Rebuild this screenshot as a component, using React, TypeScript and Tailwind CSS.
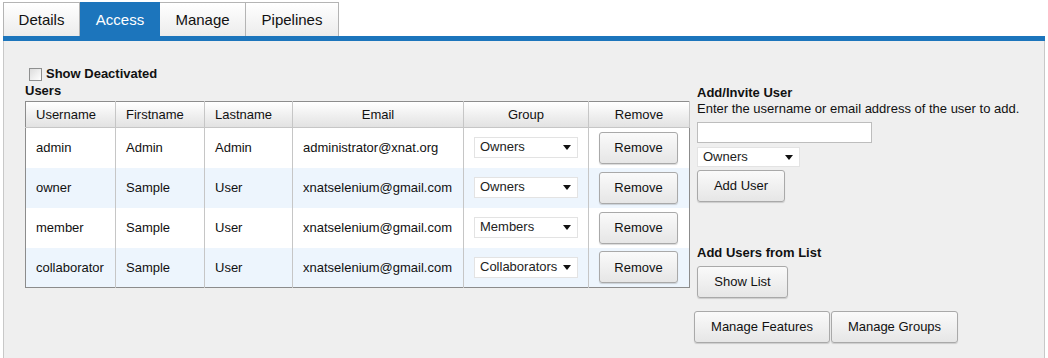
const users = [
  { username: "admin", first: "Admin", last: "Admin", email: "administrator@xnat.org", group: "Owners" },
  { username: "owner", first: "Sample", last: "User", email: "xnatselenium@gmail.com", group: "Owners" },
  { username: "member", first: "Sample", last: "User", email: "xnatselenium@gmail.com", group: "Members" },
  { username: "collaborator", first: "Sample", last: "User", email: "xnatselenium@gmail.com", group: "Collaborators" },
];

const tabs = ["Details", "Access", "Manage", "Pipelines"];

function FakeSelect({ value, className }: { value: string; className: string }) {
  return (
    <div className={`flex items-center justify-between bg-white border border-[#e3e3e3] pl-[5px] pr-[6px] text-[13px] text-[#222] ${className}`}>
      <span className="leading-none -mt-[2px]">{value}</span>
      <svg width="8" height="5" viewBox="0 0 8 5">
        <path d="M0 0h8L4 5z" fill="#111" />
      </svg>
    </div>
  );
}

function Btn({ label, className }: { label: string; className: string }) {
  return (
    <button className={`flex items-center justify-center rounded-[3px] border border-[#a9a9a9] bg-gradient-to-b from-[#fafafa] to-[#e6e6e6] shadow-[0_1px_1px_rgba(0,0,0,0.15)] text-[13px] text-[#111] ${className}`}>
      {label}
    </button>
  );
}

export default function App() {
  return (
    <div className="w-[1048px] h-[358px] bg-white pt-[2px] pl-[3px] font-['Liberation_Sans',Arial,sans-serif] text-[#111] overflow-hidden">
      {/* tabs */}
      <div className="flex h-[34px]">
        {tabs.map((t, i) =>
          t === "Access" ? (
            <div key={t} className="w-[80px] flex items-center justify-center pt-[2px] bg-[#1c75bc] text-white text-[15px]">
              {t}
            </div>
          ) : (
            <div
              key={t}
              className={`flex items-center justify-center pt-[2px] border-t border-r border-[#b4b4b4] bg-gradient-to-b from-white to-[#ececec] text-[15px] ${
                i === 0 ? "w-[77px] border-l" : t === "Manage" ? "w-[86px]" : "w-[93px]"
              }`}
            >
              {t}
            </div>
          )
        )}
      </div>
      <div className="w-[1042px] h-[5px] bg-[#1c75bc]" />

      {/* panel */}
      <div className="w-[1042px] h-[320px] bg-[#efefef] border-l border-r border-[#c8c8c8] flex pl-[21px] pt-[26px]">
        <div className="w-[665px]">
          <label className="flex items-center ml-[4px] h-[14px] text-[13px] font-bold">
            <span className="w-[13px] h-[13px] border border-[#8e8f8f] bg-gradient-to-br from-[#dcdcdc] to-white mr-[4px]" />
            Show Deactivated
          </label>
          <div className="text-[13px] font-bold leading-[15px] mt-[2px]">Users</div>
          <table className="mt-[3px] w-[664px] border border-[#8c8c8c] border-collapse text-[13px] table-fixed">
            <colgroup>
              <col className="w-[90px]" />
              <col className="w-[89px]" />
              <col className="w-[88px]" />
              <col className="w-[171px]" />
              <col className="w-[125px]" />
              <col className="w-[101px]" />
            </colgroup>
            <thead>
              <tr className="h-[26px] bg-gradient-to-b from-white to-[#e1e1e1]">
                {["Username", "Firstname", "Lastname", "Email", "Group", "Remove"].map((h, i) => (
                  <th
                    key={h}
                    className={`font-normal border-r border-b border-[#c6c6c6] ${i < 3 ? "text-left pl-[10px]" : "text-center"}`}
                  >
                    {h}
                  </th>
                ))}
              </tr>
            </thead>
            <tbody>
              {users.map((u, i) => (
                <tr key={u.username} className={`h-[40px] ${i % 2 ? "bg-[#edf5fd]" : "bg-white"}`}>
                  <td className="pl-[10px] border-r border-[#c6c6c6]">{u.username}</td>
                  <td className="pl-[10px] border-r border-[#c6c6c6]">{u.first}</td>
                  <td className="pl-[10px] border-r border-[#c6c6c6]">{u.last}</td>
                  <td className="pl-[10px] border-r border-[#c6c6c6]">{u.email}</td>
                  <td className="border-r border-[#c6c6c6]">
                    <FakeSelect value={u.group} className="ml-[10px] w-[104px] h-[21px]" />
                  </td>
                  <td>
                    <Btn label="Remove" className="ml-[10px] w-[79px] h-[32px]" />
                  </td>
                </tr>
              ))}
            </tbody>
          </table>
        </div>

        <div className="ml-[7px] pt-[18px] flex flex-col">
          <div className="text-[13px] font-bold leading-[16px]">Add/Invite User</div>
          <div className="text-[13px] leading-[16px]">Enter the username or email address of the user to add.</div>
          <div className="mt-[5px] w-[175px] h-[21px] border border-[#bdbdbd] bg-white" />
          <FakeSelect value="Owners" className="mt-[4px] w-[103px] h-[20px]" />
          <Btn label="Add User" className="mt-[3px] w-[88px] h-[32px]" />
          <div className="mt-[43px] text-[13px] font-bold leading-[16px]">Add Users from List</div>
          <Btn label="Show List" className="mt-[5px] w-[91px] h-[32px]" />
          <div className="mt-[13px] -ml-[3px] flex gap-[1px]">
            <Btn label="Manage Features" className="w-[136px] h-[32px]" />
            <Btn label="Manage Groups" className="w-[127px] h-[32px]" />
          </div>
        </div>
      </div>
    </div>
  );
}
